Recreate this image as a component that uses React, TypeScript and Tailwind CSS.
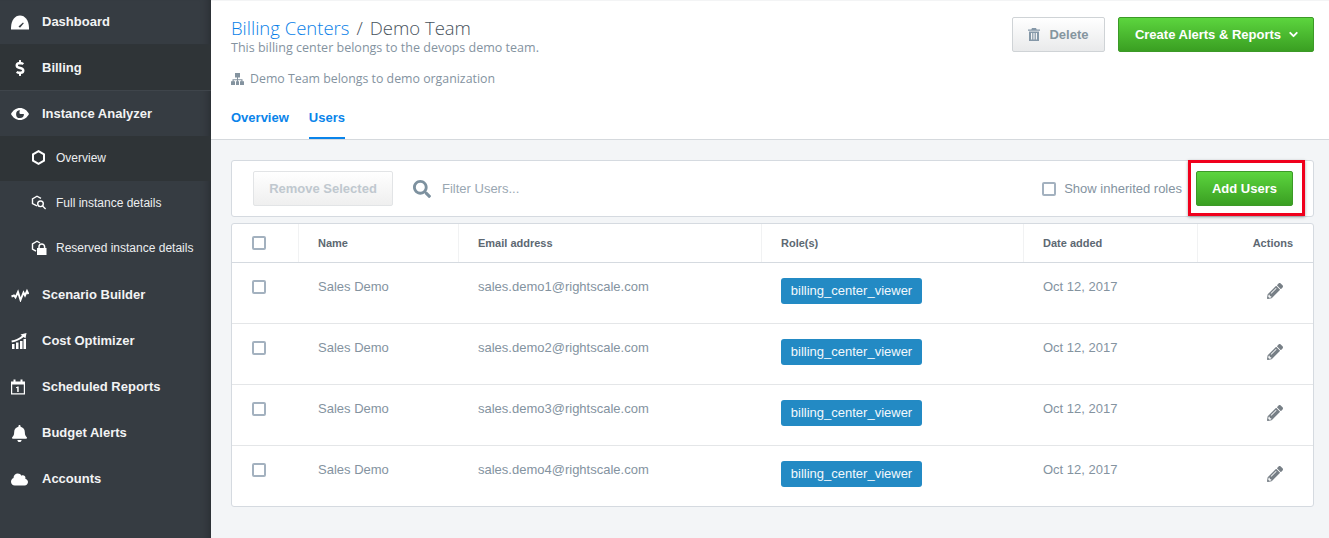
import { ReactNode } from "react";
import { FaBell, FaCloud, FaDollarSign, FaPencilAlt, FaSearch } from "react-icons/fa";
import { FiChevronDown } from "react-icons/fi";

const sans = "font-['Liberation_Sans',Arial,sans-serif]";

const GaugeIcon = () => (
  <svg width="18" height="15" viewBox="0 0 18 15" fill="white">
    <path d="M0 14.500C-.3 6 3.500.5 9 .5s9.300 5.500 9 14H0z" />
    <path d="M7.500 11.500l4.500-4 .8.800-3.800 4.500z" fill="#363c42" />
  </svg>
);

const EyeIcon = () => (
  <svg width="18" height="14" viewBox="0 0 18 14" fill="white">
    <path fillRule="evenodd" d="M9 1c4 0 7.300 2.600 9 6-1.700 3.400-5 6-9 6S1.700 10.400 0 7c1.700-3.400 5-6 9-6zM9 3.200A3.900 3.900 0 1 0 12.900 7H9.600C8.300 7 8 5.500 9 3.200z" />
  </svg>
);

const HexIcon = () => (
  <svg width="15" height="15" viewBox="0 0 15 15" fill="none" stroke="white" strokeWidth="2">
    <path d="M7.500 1.200l5.500 3.100v6.400l-5.500 3.100L2 10.700V4.300z" />
  </svg>
);

const HexSearchIcon = () => (
  <svg width="16" height="15" viewBox="0 0 16 15" fill="none" stroke="white" strokeWidth="1.400">
    <path d="M6 10.800L1.500 8.500V3.800L6 1.200l4 2.200" />
    <circle cx="9.500" cy="8.800" r="2.800" />
    <path d="M11.600 11l3 3" />
  </svg>
);

const HexLockIcon = () => (
  <svg width="16" height="15" viewBox="0 0 16 15" fill="none" stroke="white" strokeWidth="1.400">
    <path d="M5 11.200L1.500 9V4l4.500-2.800 3 1.800" />
    <rect x="6" y="8" width="9.500" height="7" fill="white" stroke="none" />
    <path d="M8 8.500V6.800a2.800 2.800 0 0 1 5.600 0v1.700" strokeWidth="1.500" />
  </svg>
);

const WaveIcon = () => (
  <svg width="18" height="14" viewBox="0 0 18 14" fill="none" stroke="white" strokeWidth="1.900">
    <path d="M.5 8.500L3 7.500l1.500 2 2.500-5.500 2.500 8 3-7.500 1.500 3 2-4.500 1.500 3" />
  </svg>
);

const ChartIcon = () => (
  <svg width="16" height="16" viewBox="0 0 16 16" fill="white">
    <path d="M1 11h2.500v5H1zM5 9.500h2.500V16H5zM9 8h2.500v8H9zM12.500 6H15v10h-2.500z" />
    <path d="M.5 7.500C4 7 8 5.500 11 2.800L9.500 1.500 15.500 0l-1 5.500-1.800-1.500C9 7 5 8.800 .8 9.500z" />
  </svg>
);

const CalendarIcon = () => (
  <svg width="14" height="16" viewBox="0 0 14 16" fill="white">
    <path fillRule="evenodd" d="M0 2.500h2.500V.5h2v2h5v-2h2v2H14V15.500H0zM1.200 5.500v8.800h11.600V5.500z" />
    <path d="M6.200 7.500h1.500v5.500H6.200zM5 8.300l1.500-.8v1.200l-1.500.5z" />
  </svg>
);

const TrashIcon = () => (
  <svg width="12" height="13" viewBox="0 0 12 13" fill="#8598a8">
    <path d="M4 0h4l.7 1.500H12v1.300H0V1.500h3.300z" />
    <path fillRule="evenodd" d="M1 3.500h10V13H1zM3 5v6.500h1.200V5zM5.400 5v6.500h1.200V5zM7.800 5v6.500H9V5z" />
  </svg>
);

const OrgIcon = () => (
  <svg width="13" height="12" viewBox="0 0 13 12" fill="#84939f">
    <path d="M4 0h5v4.500H7v1.700h4.500v2H13V12H9V8.200h1.300V7.300H7v.9h1V12H5V8.200h1v-.9H2.700v.9H4V12H0V8.200h1.500v-2H6V4.500H4z" />
  </svg>
);

const Box = () => <span className="block size-[14px] rounded-[2px] border-2 border-[#a3b1bf] bg-white" />;

function NavItem({ icon, label, className = "" }: { icon: ReactNode; label: string; className?: string }) {
  return (
    <div className={`flex h-[46px] shrink-0 items-center pl-[11px] ${className}`}>
      <span className="flex w-[31px] justify-start">{icon}</span>
      <span className="text-[13px] font-bold text-[#f2f3f4]">{label}</span>
    </div>
  );
}

function SubItem({ icon, label, className = "" }: { icon: ReactNode; label: string; className?: string }) {
  return (
    <div className={`flex h-[45px] shrink-0 items-center pb-[2px] pl-[31px] ${className}`}>
      <span className="flex w-[25px]">{icon}</span>
      <span className="text-[12px] text-[#eceef0]">{label}</span>
    </div>
  );
}

function Sidebar() {
  return (
    <aside className="relative flex h-full w-[211px] shrink-0 flex-col bg-[#363c42] shadow-[inset_-10px_0_8px_-8px_rgba(0,0,0,0.25)]">
      <NavItem icon={<GaugeIcon />} label="Dashboard" className="!h-[45px] border-b border-[#2f3438]" />
      <NavItem
        icon={<FaDollarSign className="ml-[1px] text-white" size={16} />}
        label="Billing"
        className="border-b border-[#3f454b] bg-[#2f3437]"
      />
      <NavItem icon={<EyeIcon />} label="Instance Analyzer" className="!h-[45px]" />
      <SubItem icon={<HexIcon />} label="Overview" className="bg-[#2f3437]" />
      <SubItem icon={<HexSearchIcon />} label="Full instance details" />
      <SubItem icon={<HexLockIcon />} label="Reserved instance details" />
      <NavItem icon={<WaveIcon />} label="Scenario Builder" className="pt-[2px]" />
      <NavItem icon={<ChartIcon />} label="Cost Optimizer" className="pt-[2px]" />
      <NavItem icon={<CalendarIcon />} label="Scheduled Reports" className="pt-[2px]" />
      <NavItem icon={<FaBell className="text-white" size={17} />} label="Budget Alerts" className="pt-[2px]" />
      <NavItem icon={<FaCloud className="text-white" size={17} />} label="Accounts" className="pt-[2px]" />
    </aside>
  );
}

function Header() {
  return (
    <header className="h-[140px] shrink-0 border-b border-[#d5d9dd] bg-white pl-5 pr-[15px] shadow-[inset_0_1px_0_#f3f4f5]">
      <div className="flex items-start justify-between">
        <div className="pt-[15px] font-['Open_Sans',sans-serif]">
          <h1 className="text-[18.500px] leading-[26px] font-light text-[#47525c]">
            <span className="text-[#0a7fe8]">Billing Centers</span>
            <span className="mx-[7px]">/</span>
            Demo Team
          </h1>
          <p className="text-[12.520px] leading-[14px] text-[#84939f]">This billing center belongs to the devops demo team.</p>
          <p className="mt-[16px] flex items-center gap-[6px] text-[12.350px] leading-[16px] text-[#84939f]">
            <OrgIcon />
            Demo Team belongs to demo organization
          </p>
        </div>
        <div className="flex gap-[13px] pt-[17px]">
          <button className="flex h-[35px] w-[93px] items-center justify-center gap-[9px] rounded-[2px] border border-[#cfd3d6] bg-gradient-to-b from-white to-[#e9eaeb] text-[13px] font-bold text-[#85959f]">
            <TrashIcon />
            Delete
          </button>
          <button className="flex h-[35px] w-[196px] items-center justify-center gap-[6px] rounded-[2px] border border-[#3c9a27] bg-gradient-to-b from-[#5cd53e] to-[#3a9f22] pl-[3px] text-[13px] font-bold text-white">
            Create Alerts &amp; Reports
            <FiChevronDown size={13} strokeWidth={3.500} />
          </button>
        </div>
      </div>
      <nav className="mt-[21px] flex gap-5 text-[13px] font-bold text-[#0a84ea]">
        <span className="h-[29px]">Overview</span>
        <span className="h-[31px] border-b-2 border-[#0a84ea]">Users</span>
      </nav>
    </header>
  );
}

function Toolbar() {
  return (
    <div className="flex h-[57px] items-center rounded-[3px] border border-[#d5dae0] bg-white pl-[21px] pr-[20px]">
      <button className="h-[35px] w-[140px] rounded-[2px] border border-[#e2e4e6] bg-gradient-to-b from-white to-[#efefef] text-[13px] font-bold text-[#c0c8cf]">
        Remove Selected
      </button>
      <FaSearch size={18} className="ml-[20px] text-[#7d919f]" />
      <span className="ml-[11px] text-[13px] text-[#9aa7b2]">Filter Users...</span>
      <label className="ml-auto flex items-center gap-[8px] text-[13px] text-[#84939f]">
        <Box />
        Show inherited roles
      </label>
      <div className="relative ml-[14px]">
        <button className="block h-[35px] w-[97px] rounded-[2px] border border-[#3c9a27] bg-gradient-to-b from-[#5cd53e] to-[#3a9f22] text-[13px] font-bold text-white">
          Add Users
        </button>
        <span className="absolute -top-[11px] -right-[12px] -bottom-[10px] -left-[8px] border-[3px] border-[#f0001c] shadow-[0_1px_3px_rgba(0,0,0,0.35)]" />
      </div>
    </div>
  );
}

const gridCols = "grid grid-cols-[66px_160px_303px_262px_174px_1fr]";

function UserRow({ n }: { n: number }) {
  return (
    <div className={`${gridCols} h-[61px] border-t border-[#e4e6e8] text-[13px] text-[#84939f] first:h-[60px] first:border-t-0`}>
      <div className="pl-5 pt-[17px]"><Box /></div>
      <div className="pl-5 pt-[16px] leading-[16px]">Sales Demo</div>
      <div className="pl-5 pt-[16px] leading-[16px]">sales.demo{n}@rightscale.com</div>
      <div className="pl-5 pt-[15px]">
        <span className="inline-block h-[26px] w-[141px] rounded-[3px] bg-[#238ac4] text-center leading-[26px] text-[#f2f8fc]">
          billing_center_viewer
        </span>
      </div>
      <div className="pl-5 pt-[16px] leading-[16px]">Oct 12, 2017</div>
      <div className="flex justify-end pr-[30px] pt-[20px]">
        <FaPencilAlt size={16} className="text-[#777f86]" />
      </div>
    </div>
  );
}

function UsersTable() {
  const headCell = "flex items-center border-l border-[#f1f2f3] pl-[19px]";
  return (
    <div className="mt-[6px] rounded-[3px] border border-[#d5dae0] bg-white">
      <div className={`${gridCols} h-[39px] border-b border-[#d5dae0] text-[11px] font-bold text-[#5d6872]`}>
        <div className="flex items-center pl-5"><Box /></div>
        <div className={headCell}>Name</div>
        <div className={headCell}>Email address</div>
        <div className={headCell}>Role(s)</div>
        <div className={headCell}>Date added</div>
        <div className={`${headCell} justify-end pr-5`}>Actions</div>
      </div>
      <div>
        {[1, 2, 3, 4].map((n) => (
          <UserRow key={n} n={n} />
        ))}
      </div>
    </div>
  );
}

export default function App() {
  return (
    <div className={`flex h-[538px] w-[1329px] overflow-hidden bg-[#f3f5f7] ${sans}`}>
      <Sidebar />
      <main className="flex min-w-0 flex-1 flex-col">
        <Header />
        <section className="pl-5 pr-[15px] pt-5">
          <Toolbar />
          <UsersTable />
        </section>
      </main>
    </div>
  );
}
